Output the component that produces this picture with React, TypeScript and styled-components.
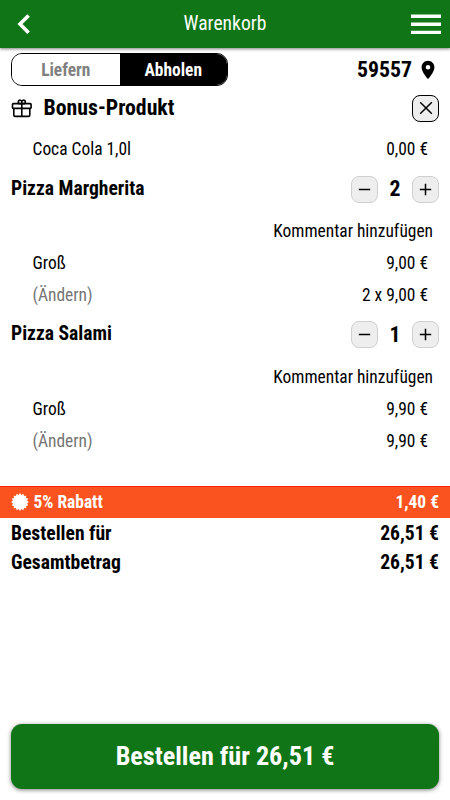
import React from "react";
import styled, { createGlobalStyle } from "styled-components";

const GlobalStyle = createGlobalStyle`
  *, *::before, *::after { box-sizing: border-box; }
  body { margin: 0; background: #fff; }
  button { font: inherit; color: inherit; padding: 0; cursor: pointer; }
`;

const Screen = styled.div`
  display: flex;
  flex-direction: column;
  width: 100%;
  height: 100vh;
  overflow: hidden;
  color: #000;
  font-family: "Roboto Condensed", Roboto, sans-serif;
  font-size: 17.43px;
  line-height: 32px;
  svg { display: block; flex: none; }
`;

const TopBar = styled.header`
  display: grid;
  grid-template-columns: 48px 1fr 48px;
  align-items: center;
  flex: none;
  height: 48px;
  background: #107516;
  color: #fff;
  box-shadow: 0 1px 3px rgba(0, 0, 0, 0.5);
`;

const Title = styled.h1`
  margin: 0;
  text-align: center;
  font-size: 19.6px;
  font-weight: 400;
`;

const BarButton = styled.button`
  display: grid;
  place-items: center;
  width: 48px;
  height: 48px;
  border: 0;
  background: none;
`;

const Toolbar = styled.div`
  display: flex;
  align-items: center;
  justify-content: space-between;
  flex: none;
  height: 43px;
  padding: 0 11px;
`;

const Toggle = styled.div`
  display: flex;
  width: 217px;
  height: 33px;
  border: 1px solid #000;
  border-radius: 11px;
  overflow: hidden;
`;

const ToggleOption = styled.button<{ $active?: boolean }>`
  flex: 1;
  padding-top: 1px;
  border: 0;
  background: ${(p) => (p.$active ? "#000" : "#fff")};
  color: ${(p) => (p.$active ? "#fff" : "#808080")};
  font-weight: 700;
  line-height: 30px;
`;

const Location = styled.div`
  display: flex;
  align-items: center;
  gap: 5px;
  font-size: 21.8px;
  font-weight: 700;
`;

const BonusHeader = styled.div`
  display: flex;
  align-items: center;
  flex: none;
  height: 34px;
  padding: 0 11px;
`;

const BonusTitle = styled.h2`
  flex: 1;
  margin: 0 0 0 11.5px;
  font-size: 21.8px;
  font-weight: 700;
`;

const SquareButton = styled.button<{ $outlined?: boolean }>`
  display: grid;
  place-items: center;
  width: 27px;
  height: 27px;
  border: 1px solid ${(p) => (p.$outlined ? "#000" : "#cfcfcf")};
  border-radius: 8px;
  background: #eee;
`;

const SubRow = styled.div<{ $height?: number }>`
  display: flex;
  align-items: center;
  justify-content: space-between;
  flex: none;
  height: ${(p) => p.$height ?? 32}px;
  padding: 0 22px 0 32.5px;
`;

const Change = styled.span`
  color: #757575;
`;

const Item = styled.section`
  flex: none;
  height: 145.5px;
`;

const ItemHeader = styled.div`
  display: flex;
  align-items: center;
  justify-content: space-between;
  height: 32px;
  padding: 0 11px;
`;

const ItemName = styled.h3`
  margin: 0;
  padding-bottom: 2px;
  font-size: 19.6px;
  line-height: 29px;
  font-weight: 700;
`;

const Stepper = styled.div`
  display: flex;
  align-items: center;
`;

const Quantity = styled.span`
  width: 34px;
  text-align: center;
  font-size: 21.8px;
  font-weight: 700;
`;

const Comment = styled.div`
  margin-top: 10px;
  padding-right: 17px;
  text-align: right;
`;

const Discount = styled.div`
  display: flex;
  align-items: center;
  flex: none;
  height: 32px;
  margin-top: 22px;
  padding: 0 11px;
  border-top: 1px solid #ff1c04;
  background: #fb531f;
  color: #fff;
  font-weight: 700;
  line-height: 31px;
  span { flex: 1; padding-left: 4.5px; }
`;

const SumRow = styled.div`
  display: flex;
  justify-content: space-between;
  flex: none;
  padding: 0 11px;
  font-size: 19.6px;
  line-height: 29.5px;
  font-weight: 700;
`;

const Totals = styled.div`
  flex: none;
  padding-top: 0.5px;
`;

const OrderButton = styled.button`
  flex: none;
  height: 65px;
  margin: auto 11px 11px;
  padding-bottom: 2px;
  border: 0;
  border-radius: 11px;
  background: #107516;
  color: #fff;
  font-size: 26.15px;
  font-weight: 700;
  box-shadow: 0 1px 4px rgba(0, 0, 0, 0.5);
`;

const BackIcon = () => (
  <svg width="14" height="22" viewBox="0 0 14 22" fill="none" stroke="#fff" strokeWidth="3.6">
    <path d="M11.6 2.4 3 11.1l8.6 8.7" />
  </svg>
);

const MenuIcon = () => (
  <svg width="30" height="21" viewBox="0 0 30 21" fill="#fff">
    <path d="M0 .5h30v3.4H0zM0 8.6h30V12H0zM0 16.7h30v3.4H0z" />
  </svg>
);

const PinIcon = () => (
  <svg width="22" height="22" viewBox="0 0 24 24">
    <path d="M12 2C8.13 2 5 5.13 5 9c0 5.25 7 13 7 13s7-7.75 7-13c0-3.87-3.13-7-7-7zm0 9.5a2.5 2.5 0 0 1 0-5 2.5 2.5 0 0 1 0 5z" />
  </svg>
);

const GiftIcon = () => (
  <svg width="21" height="19" viewBox="0 0 21 19" fill="none" stroke="#000" strokeWidth="1.6">
    <rect x="1.5" y="4.6" width="18.6" height="4.8" rx=".8" />
    <path d="M2.8 9.4v6.6q0 1.4 1.4 1.4h13.2q1.4 0 1.4-1.4V9.4M10.8 4.6v12.8" />
    <path d="M10.8 4.6H8.2a1.8 1.8 0 1 1 2.6-1.8zM10.8 4.6h2.6a1.8 1.8 0 1 0-2.6-1.8z" />
  </svg>
);

const CloseIcon = () => (
  <svg width="14" height="14" viewBox="0 0 14 14" stroke="#000" strokeWidth="1.5">
    <path d="M1.2 1.2 12.8 12.8M12.8 1.2 1.2 12.8" />
  </svg>
);

const MinusIcon = () => (
  <svg width="13" height="13" viewBox="0 0 13 13" stroke="#000" strokeWidth="1.5">
    <path d="M.8 6.5h11.4" />
  </svg>
);

const PlusIcon = () => (
  <svg width="13" height="13" viewBox="0 0 13 13" stroke="#000" strokeWidth="1.5">
    <path d="M.8 6.5h11.4M6.5.8v11.4" />
  </svg>
);

const SEAL_POINTS = Array.from({ length: 32 }, (_, i) => {
  const radius = i % 2 ? 7.2 : 8.9;
  const angle = (i * Math.PI) / 16;
  return `${(9 + radius * Math.sin(angle)).toFixed(2)},${(9 - radius * Math.cos(angle)).toFixed(2)}`;
}).join(" ");

const SealIcon = () => (
  <svg width="18" height="19" viewBox="0 0 18 19" fill="#fff">
    <polygon points={SEAL_POINTS} />
  </svg>
);

const items = [
  { name: "Pizza Margherita", quantity: 2, size: "Groß", price: "9,00 €", sum: "2 x 9,00 €" },
  { name: "Pizza Salami", quantity: 1, size: "Groß", price: "9,90 €", sum: "9,90 €" },
];

export default function App() {
  return (
    <Screen>
      <GlobalStyle />
      <TopBar>
        <BarButton aria-label="Zurück"><BackIcon /></BarButton>
        <Title>Warenkorb</Title>
        <BarButton aria-label="Menü"><MenuIcon /></BarButton>
      </TopBar>
      <Toolbar>
        <Toggle>
          <ToggleOption>Liefern</ToggleOption>
          <ToggleOption $active>Abholen</ToggleOption>
        </Toggle>
        <Location>59557<PinIcon /></Location>
      </Toolbar>
      <BonusHeader>
        <GiftIcon />
        <BonusTitle>Bonus-Produkt</BonusTitle>
        <SquareButton $outlined aria-label="Entfernen"><CloseIcon /></SquareButton>
      </BonusHeader>
      <SubRow $height={48}>
        <span>Coca Cola 1,0l</span>
        <span>0,00 €</span>
      </SubRow>
      {items.map((item) => (
        <Item key={item.name}>
          <ItemHeader>
            <ItemName>{item.name}</ItemName>
            <Stepper>
              <SquareButton aria-label="Weniger"><MinusIcon /></SquareButton>
              <Quantity>{item.quantity}</Quantity>
              <SquareButton aria-label="Mehr"><PlusIcon /></SquareButton>
            </Stepper>
          </ItemHeader>
          <Comment>Kommentar hinzufügen</Comment>
          <SubRow>
            <span>{item.size}</span>
            <span>{item.price}</span>
          </SubRow>
          <SubRow>
            <Change>(Ändern)</Change>
            <span>{item.sum}</span>
          </SubRow>
        </Item>
      ))}
      <Discount>
        <SealIcon />
        <span>5% Rabatt</span>
        1,40 €
      </Discount>
      <Totals>
        <SumRow><span>Bestellen für</span><span>26,51 €</span></SumRow>
        <SumRow><span>Gesamtbetrag</span><span>26,51 €</span></SumRow>
      </Totals>
      <OrderButton>Bestellen für 26,51 €</OrderButton>
    </Screen>
  );
}
